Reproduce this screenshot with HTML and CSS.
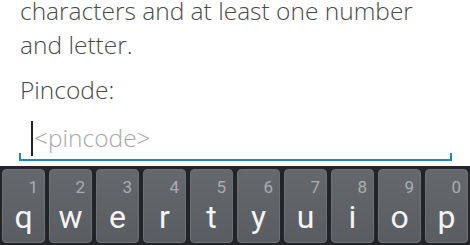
FILE: index.html
```html
<!DOCTYPE html>
<html>
<head>
<meta charset="utf-8">
<link rel="stylesheet" href="styles.css">
</head>
<body>
<div class="screen">
  <div class="form">
    <p class="hint">characters and at least one number<br>and letter.</p>
    <p class="label">Pincode:</p>
    <div class="field">
      <span class="cursor"></span><span class="placeholder">&lt;pincode&gt;</span>
    </div>
  </div>
  <div class="keyboard">
    <div class="key"><span class="num">1</span><span class="ch">q</span></div>
    <div class="key"><span class="num">2</span><span class="ch">w</span></div>
    <div class="key"><span class="num">3</span><span class="ch">e</span></div>
    <div class="key"><span class="num">4</span><span class="ch">r</span></div>
    <div class="key"><span class="num">5</span><span class="ch">t</span></div>
    <div class="key"><span class="num">6</span><span class="ch">y</span></div>
    <div class="key"><span class="num">7</span><span class="ch">u</span></div>
    <div class="key"><span class="num">8</span><span class="ch">i</span></div>
    <div class="key"><span class="num">9</span><span class="ch">o</span></div>
    <div class="key"><span class="num">0</span><span class="ch">p</span></div>
  </div>
</div>
</body>
</html>
```
FILE: styles.css
```css
html, body {
  margin: 0;
  padding: 0;
  background: #ffffff;
}
.screen {
  width: 470px;
  height: 245px;
  overflow: hidden;
  display: flex;
  flex-direction: column;
}
.form {
  padding: 0 18px 0 20px;
  font-family: "Open Sans", "Liberation Sans", sans-serif;
  font-weight: 300;
  font-size: 24.5px;
  color: #4a4a4a;
}
.hint {
  margin: -6px 0 0 0;
  line-height: 34px;
  white-space: nowrap;
}
.label {
  margin: 11px 0 0 0;
  line-height: 34px;
}
.field {
  position: relative;
  margin: 10px 0 0 -1px;
  height: 42px;
  border-bottom: 2px solid #1f86be;
  display: flex;
  align-items: center;
  padding-left: 12px;
}
.field::before,
.field::after {
  content: "";
  position: absolute;
  bottom: 0;
  width: 2px;
  height: 6px;
  background: #1f86be;
}
.field::before { left: 0; }
.field::after { right: 0; }
.cursor {
  width: 2px;
  height: 35px;
  background: #222;
  margin-right: 1px;
}
.placeholder {
  color: #a8a8a8;
  line-height: 34px;
}
.keyboard {
  margin-top: 5px;
  flex: 1;
  background: #232427;
  display: flex;
  gap: 4px;
  padding: 3px 2px 0 2px;
}
.key {
  flex: 0 0 43px;
  height: 74px;
  box-sizing: border-box;
  border: 1px solid #6d7176;
  border-radius: 4px;
  background: linear-gradient(#65696e, #595c61);
  display: flex;
  flex-direction: column;
  font-family: Roboto, "Noto Sans", sans-serif;
}
.num {
  align-self: flex-end;
  margin: 9px 6px 0 0;
  font-size: 17px;
  line-height: 16px;
  color: #a9acb0;
}
.ch {
  text-align: center;
  font-size: 32px;
  line-height: 32px;
  margin-top: 6px;
  color: #f4f4f4;
}
```
